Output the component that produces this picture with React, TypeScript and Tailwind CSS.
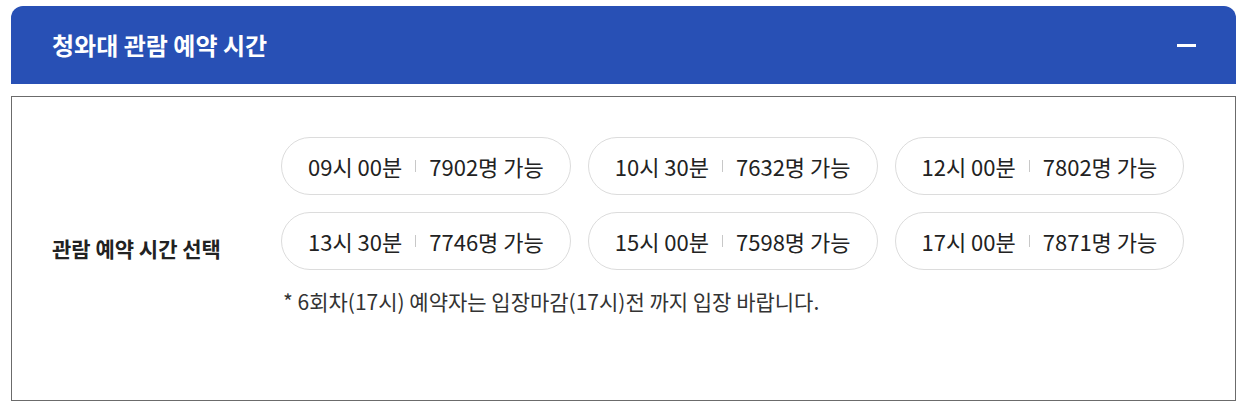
import React from 'react';

type Slot = { time: string; seats: number };

const rows: Slot[][] = [
  [
    { time: '09시 00분', seats: 7902 },
    { time: '10시 30분', seats: 7632 },
    { time: '12시 00분', seats: 7802 },
  ],
  [
    { time: '13시 30분', seats: 7746 },
    { time: '15시 00분', seats: 7598 },
    { time: '17시 00분', seats: 7871 },
  ],
];

const font = { fontFamily: '"Noto Sans CJK KR", "Noto Sans", sans-serif' };

const SlotChip: React.FC<{ slot: Slot }> = ({ slot }) => (
  <button className="flex h-[58px] items-center rounded-full border border-[#dcdcdc] bg-white px-[26px] text-[22px] text-[#222]">
    <span>{slot.time}</span>
    <span className="mx-[13px] h-[12px] w-px bg-[#c8c8c8]" />
    <span>{slot.seats}명 가능</span>
  </button>
);

const App: React.FC = () => {
  return (
    <div className="min-h-[409px] w-[1244px] bg-white pt-[6px]" style={font}>
      <div className="ml-[11px] w-[1225px]">
        <div className="flex h-[78px] items-center justify-between rounded-t-[12px] bg-[#2850b5] pl-[41px] pr-[40px]">
          <h2 className="text-[24px] font-bold text-white">청와대 관람 예약 시간</h2>
          <span className="h-[3px] w-[19px] bg-white" />
        </div>

        <div className="mt-[12px] flex h-[305px] border border-[#6b6b6b] pl-[40px]">
          <div className="w-[229px] self-center text-[21px] font-bold text-[#222]">
            관람 예약 시간 선택
          </div>
          <div className="flex flex-col pt-[40px]">
            <div className="flex flex-col gap-[17px]">
              {rows.map((row, i) => (
                <div key={i} className="flex gap-[17px]">
                  {row.map((slot) => (
                    <SlotChip key={slot.time} slot={slot} />
                  ))}
                </div>
              ))}
            </div>
            <p className="mt-[17px] pl-[2px] text-[21px] leading-[28px] text-[#333]">
              * 6회차(17시) 예약자는 입장마감(17시)전 까지 입장 바랍니다.
            </p>
          </div>
        </div>
      </div>
    </div>
  );
};

export default App;
